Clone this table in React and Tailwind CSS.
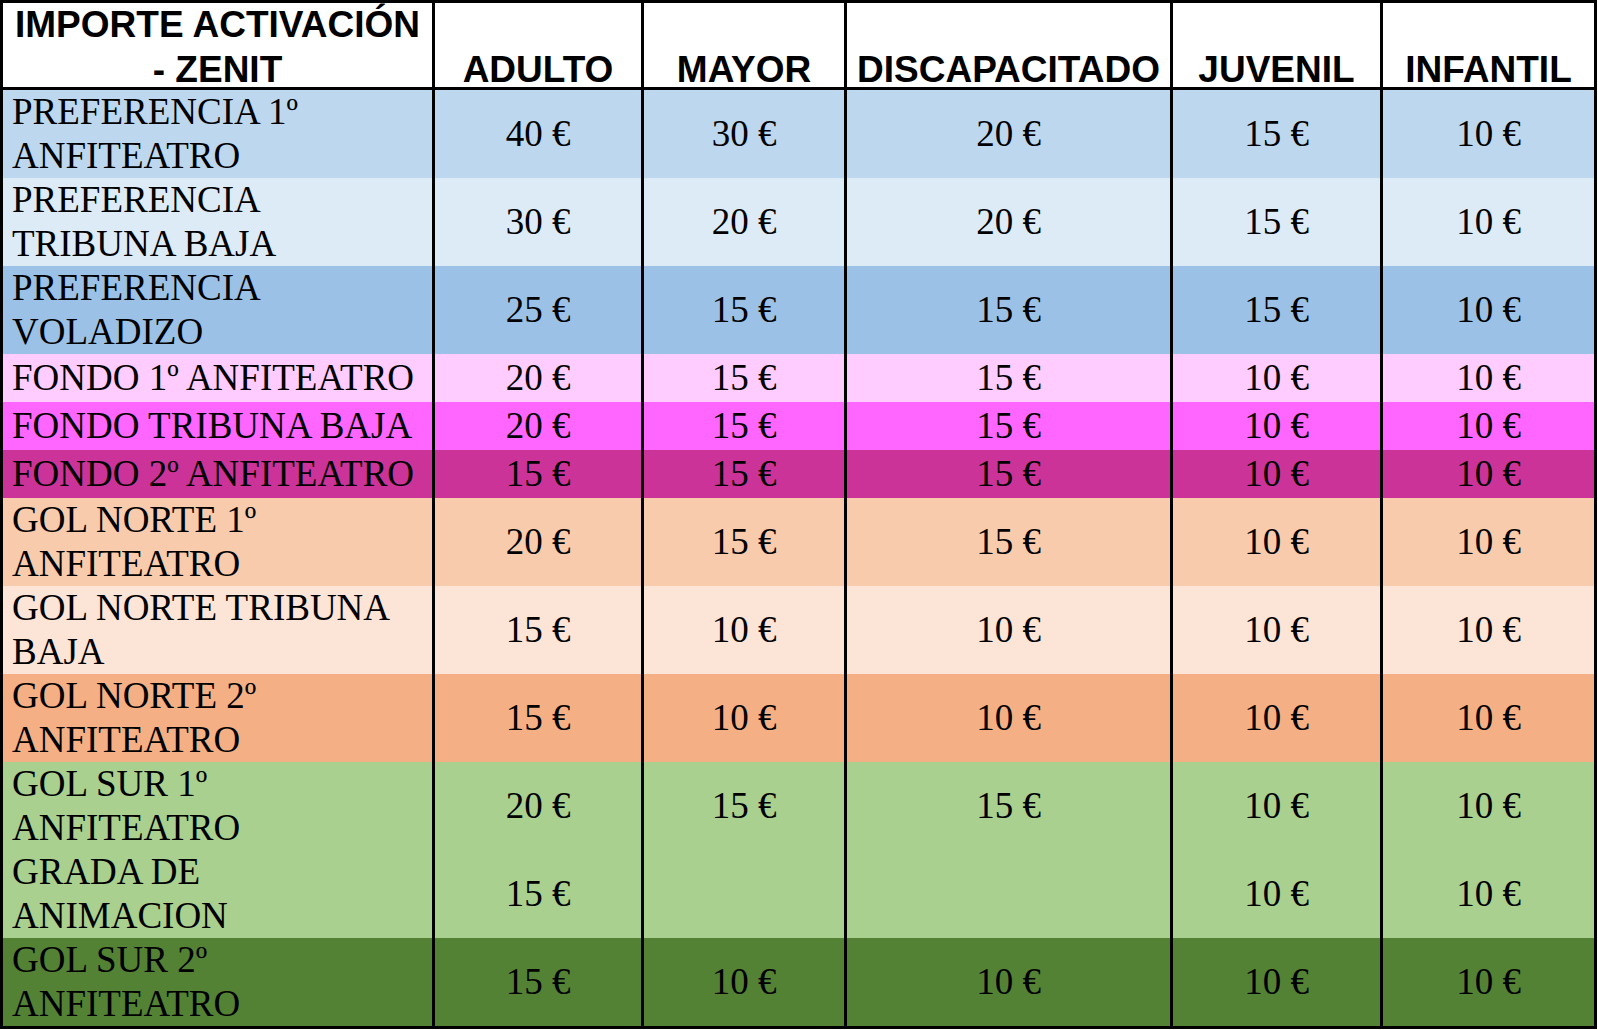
const headers = ["ADULTO", "MAYOR", "DISCAPACITADO", "JUVENIL", "INFANTIL"];

const rows = [
  { label: ["PREFERENCIA 1º", "ANFITEATRO"], bg: "bg-[#bdd7ee]", values: ["40 €", "30 €", "20 €", "15 €", "10 €"] },
  { label: ["PREFERENCIA", "TRIBUNA BAJA"], bg: "bg-[#ddebf7]", values: ["30 €", "20 €", "20 €", "15 €", "10 €"] },
  { label: ["PREFERENCIA", "VOLADIZO"], bg: "bg-[#9bc2e6]", values: ["25 €", "15 €", "15 €", "15 €", "10 €"] },
  { label: ["FONDO 1º ANFITEATRO"], bg: "bg-[#ffccff]", values: ["20 €", "15 €", "15 €", "10 €", "10 €"] },
  { label: ["FONDO TRIBUNA BAJA"], bg: "bg-[#ff66ff]", values: ["20 €", "15 €", "15 €", "10 €", "10 €"] },
  { label: ["FONDO 2º ANFITEATRO"], bg: "bg-[#cc3399]", values: ["15 €", "15 €", "15 €", "10 €", "10 €"] },
  { label: ["GOL NORTE 1º", "ANFITEATRO"], bg: "bg-[#f8cbad]", values: ["20 €", "15 €", "15 €", "10 €", "10 €"] },
  { label: ["GOL NORTE TRIBUNA", "BAJA"], bg: "bg-[#fce4d6]", values: ["15 €", "10 €", "10 €", "10 €", "10 €"] },
  { label: ["GOL NORTE 2º", "ANFITEATRO"], bg: "bg-[#f4b084]", values: ["15 €", "10 €", "10 €", "10 €", "10 €"] },
  { label: ["GOL SUR 1º", "ANFITEATRO"], bg: "bg-[#a9d08e]", values: ["20 €", "15 €", "15 €", "10 €", "10 €"] },
  { label: ["GRADA DE", "ANIMACION"], bg: "bg-[#a9d08e]", values: ["15 €", "", "", "10 €", "10 €"] },
  { label: ["GOL SUR 2º", "ANFITEATRO"], bg: "bg-[#548235]", values: ["15 €", "10 €", "10 €", "10 €", "10 €"] },
];

const HeaderCell = ({ children, first }) => (
  <div
    className={`h-[87px] border-b-[3px] border-black bg-white flex items-end justify-center ${
      first ? "" : "border-l-[3px]"
    }`}
  >
    <div className="mb-[-5px] text-center leading-[45px] whitespace-nowrap">{children}</div>
  </div>
);

const App = () => {
  return (
    <div className="min-h-screen bg-white text-black">
      <div className="w-[1597px] border-[3px] border-black grid grid-cols-[429px_209px_203px_326px_210px_214px]">
        <div className="contents font-['Liberation_Sans',Arial,sans-serif] font-bold text-[37px]">
          <HeaderCell first>
            IMPORTE ACTIVACIÓN
            <br />- ZENIT
          </HeaderCell>
          {headers.map((h) => (
            <HeaderCell key={h}>{h}</HeaderCell>
          ))}
        </div>

        {rows.map((row, i) => {
          const tall = row.label.length > 1;
          const height = tall ? "h-[88px]" : "h-[48px]";
          return (
            <div key={i} className="contents font-['Liberation_Serif','Times_New_Roman',serif] text-[37px]">
              <div className={`${height} ${row.bg} flex items-center pl-[9px] leading-[44px]`}>
                <div>
                  {row.label.map((line) => (
                    <div key={line} className="whitespace-nowrap">
                      {line}
                    </div>
                  ))}
                </div>
              </div>
              {row.values.map((v, j) => (
                <div
                  key={j}
                  className={`${height} ${row.bg} border-l-[3px] border-black flex items-center justify-center leading-[44px] whitespace-nowrap`}
                >
                  {v}
                </div>
              ))}
            </div>
          );
        })}
      </div>
    </div>
  );
};

export default App;
